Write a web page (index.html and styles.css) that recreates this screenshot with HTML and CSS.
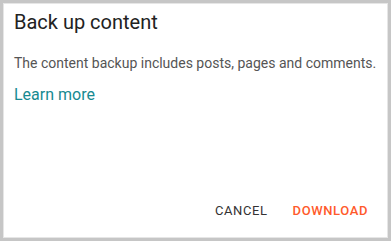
FILE: index.html
```html
<!DOCTYPE html>
<html>
<head>
<meta charset="utf-8">
<meta name="viewport" content="width=device-width, initial-scale=1">
<link rel="stylesheet" href="styles.css">
</head>
<body>
<div class="dialog">
  <div class="title">Back up content</div>
  <div class="text">The content backup includes posts, pages and comments.</div>
  <div class="link">Learn more</div>
  <div class="actions">
    <button class="btn cancel">CANCEL</button>
    <button class="btn download">DOWNLOAD</button>
  </div>
</div>
</body>
</html>
```
FILE: styles.css
```css
html {
  background: #c6c6c6;
  -webkit-text-size-adjust: none;
  text-size-adjust: none;
}
body {
  margin: 0;
  padding: 3px;
  font-family: Roboto, "Liberation Sans", sans-serif;
}
.dialog {
  background: #fff;
  border: 1px solid #e6e6e6;
  padding: 6px 11px 14px 10px;
  white-space: nowrap;
}
.title {
  font-size: 20px;
  color: #222;
  line-height: 24px;
}
.text {
  margin-top: 19px;
  font-size: 14px;
  color: #555;
  line-height: 20px;
}
.link {
  margin-top: 12px;
  font-size: 16px;
  color: #178a91;
  line-height: 20px;
}
.actions {
  margin-top: 94px;
  display: flex;
  justify-content: flex-end;
  gap: 13px;
  padding-right: 2px;
}
.btn {
  border: none;
  background: none;
  font-family: inherit;
  font-size: 13px;
  padding: 4px 6px;
  line-height: 16px;
  letter-spacing: 0.6px;
}
.cancel { color: #333; }
.download { color: #ff5a2b; font-weight: 500; }
```
